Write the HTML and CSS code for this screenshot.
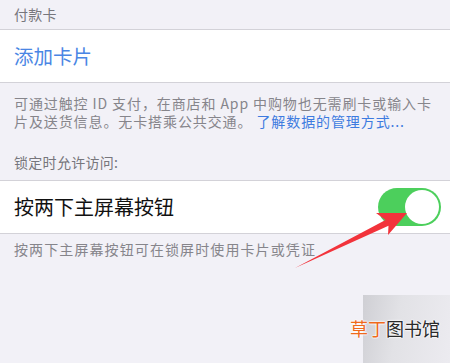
FILE: index.html
```html
<!DOCTYPE html>
<html lang="zh">
<head>
<meta charset="utf-8">
<link rel="stylesheet" href="styles.css">
</head>
<body>
<div class="page">
  <div class="section-header first">付款卡</div>
  <div class="row">
    <span class="row-label link-label">添加卡片</span>
  </div>
  <div class="section-footer">
    <div class="line">可通过触控 ID 支付，在商店和 App 中购物也无需刷卡或输入卡</div>
    <div class="line">片及送货信息。无卡搭乘公共交通。 <span class="link">了解数据的管理方式...</span></div>
  </div>

  <div class="section-header second">锁定时允许访问:</div>
  <div class="row">
    <span class="row-label">按两下主屏幕按钮</span>
    <span class="toggle"><span class="knob"></span></span>
  </div>
  <div class="section-footer single">
    <div class="line">按两下主屏幕按钮可在锁屏时使用卡片或凭证</div>
  </div>

  <svg class="arrow" width="450" height="363" viewBox="0 0 450 363">
    <polygon points="295,268 385.5,220 376,213 407,213 388,235 388.5,225.8" fill="#f2333b"/>
  </svg>

  <div class="watermark">
    <span class="wm-text"><span class="wm-orange">草丁</span><span class="wm-dark">图书馆</span></span>
  </div>
</div>
</body>
</html>
```

FILE: styles.css
```css
html, body {
  margin: 0;
  padding: 0;
}
body {
  background: #f2f1f7;
  font-family: "Noto Sans CJK SC", "Noto Sans", sans-serif;
  width: 450px;
  height: 363px;
  overflow: hidden;
}
.page {
  position: relative;
  width: 450px;
  height: 363px;
}
.section-header {
  padding-left: 14px;
  font-size: 14px;
  line-height: 18px;
  color: #77767c;
  letter-spacing: 0.3px;
}
.section-header.first {
  padding-top: 5px;
  height: 24px;
}
.section-header.second {
  margin-top: 23px;
  padding-bottom: 9px;
}
.row {
  height: 52px;
  background: #ffffff;
  border-top: 1px solid #d3d2d8;
  border-bottom: 1px solid #d3d2d8;
  display: flex;
  align-items: center;
  justify-content: space-between;
  padding-left: 14px;
  padding-right: 9px;
}
.row-label {
  font-size: 20px;
  color: #111111;
  line-height: 24px;
}
.link-label {
  color: #4a86e4;
  font-size: 19.5px;
}
.section-footer {
  padding: 11px 0 0 14px;
  font-size: 14px;
  letter-spacing: 0.9px;
  color: #86858b;
  white-space: nowrap;
}
.section-footer .line {
  height: 18px;
  line-height: 18px;
}
.section-footer.single {
  padding-top: 6px;
  letter-spacing: 1.1px;
}
.link {
  color: #3d7be0;
  display: inline-block;
  height: 18px;
  line-height: 18px;
  vertical-align: top;
}
.toggle {
  width: 63px;
  height: 38px;
  border-radius: 19px;
  background: #4ccf5c;
  display: flex;
  align-items: center;
  justify-content: flex-end;
  padding-right: 2px;
  box-sizing: border-box;
}
.knob {
  width: 34px;
  height: 34px;
  border-radius: 50%;
  background: #ffffff;
}
.arrow {
  position: absolute;
  left: 0;
  top: 0;
}
.watermark {
  position: absolute;
  left: 363px;
  top: 295px;
  width: 87px;
  height: 68px;
  background: linear-gradient(100deg, #cfcfd4 0%, #e2e2e6 40%, #ecebf0 100%);
  display: flex;
  align-items: center;
}
.wm-text {
  margin-left: -13px;
  margin-top: -2px;
  font-size: 18px;
  line-height: 20px;
  white-space: nowrap;
}
.wm-orange {
  color: #ef6a1c;
  text-shadow: 0 0 2px #fff, 0 0 2px #fff, 0 0 2px #fff;
}
.wm-dark {
  color: #2a2a2a;
  text-shadow: 0 0 2px #fff, 0 0 2px #fff, 0 0 2px #fff;
}
```
